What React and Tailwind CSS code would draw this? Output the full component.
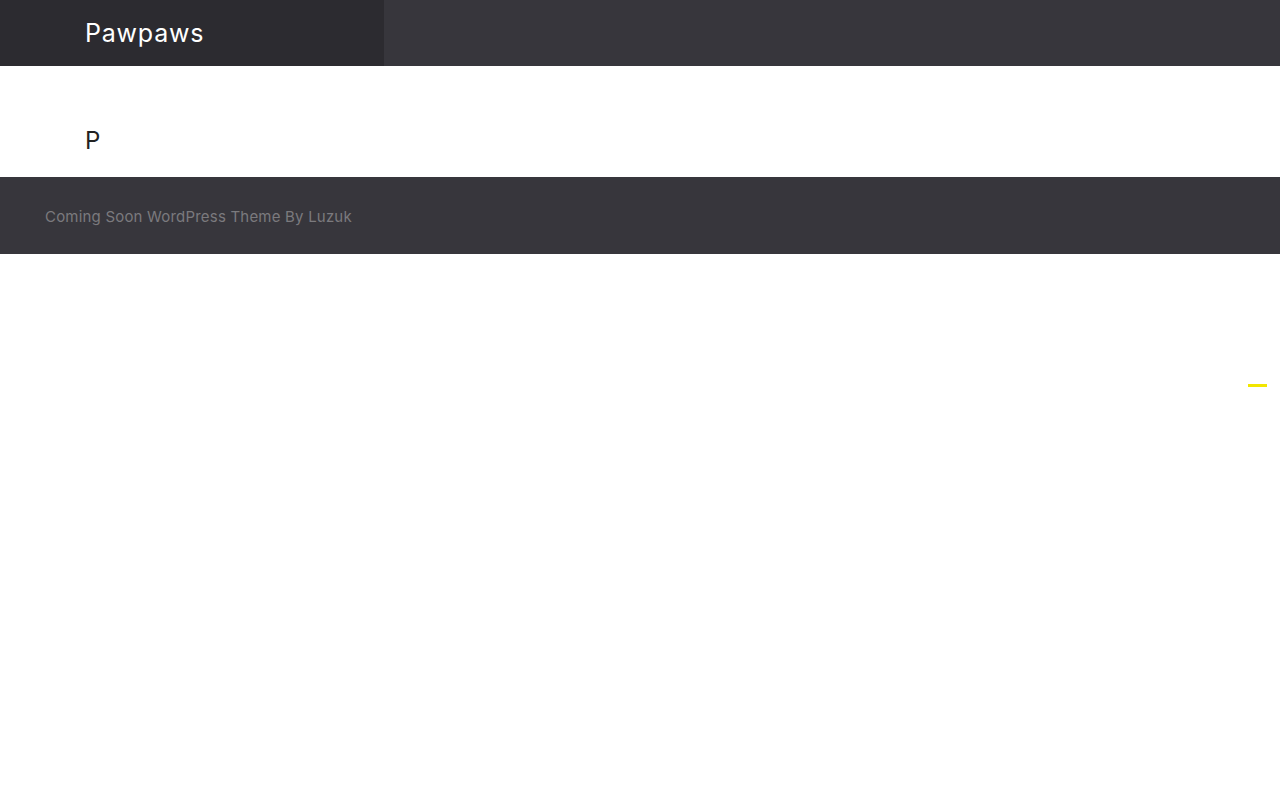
export default function App() {
  return (
    <div className="relative min-h-[800px] bg-white" style={{ fontFamily: "Inter, 'Noto Sans', sans-serif" }}>
      <header className="flex h-[66px] bg-[#37363c]">
        <div className="flex w-[384px] items-center bg-[#2c2b30] pl-[85px]">
          <span className="text-[25px] font-normal leading-none text-white tracking-[0.8px]">Pawpaws</span>
        </div>
      </header>
      <main className="h-[111px] pl-[85px] pt-[63px]">
        <span className="text-[24px] leading-none text-[#222222]">P</span>
      </main>
      <footer className="flex h-[77px] items-center bg-[#37363c] pl-[45px] pt-[3px]">
        <span className="text-[15px] tracking-[0.2px] text-[#7b7a7e]">Coming Soon WordPress Theme By Luzuk</span>
      </footer>
      <div className="absolute left-[1248px] top-[384px] h-[3px] w-[19px] bg-[#f2e600]" />
    </div>
  );
}
